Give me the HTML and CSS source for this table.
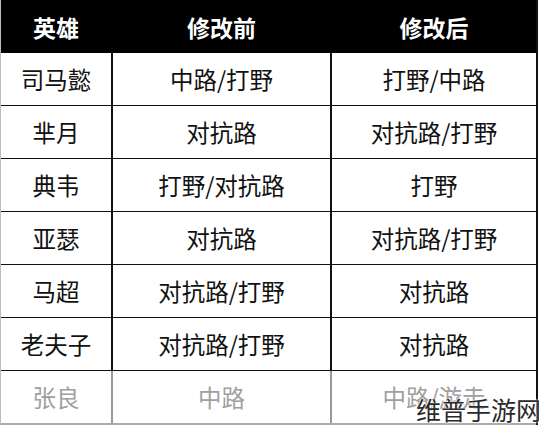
FILE: index.html
```html
<!DOCTYPE html>
<html lang="zh">
<head>
<meta charset="utf-8">
<link rel="stylesheet" href="styles.css">
</head>
<body>
<div class="table">
  <div class="row head">
    <div class="cell c1">英雄</div>
    <div class="cell c2">修改前</div>
    <div class="cell c3">修改后</div>
  </div>
  <div class="row">
    <div class="cell c1">司马懿</div>
    <div class="cell c2">中路/打野</div>
    <div class="cell c3">打野/中路</div>
  </div>
  <div class="row">
    <div class="cell c1">芈月</div>
    <div class="cell c2">对抗路</div>
    <div class="cell c3">对抗路/打野</div>
  </div>
  <div class="row">
    <div class="cell c1">典韦</div>
    <div class="cell c2">打野/对抗路</div>
    <div class="cell c3">打野</div>
  </div>
  <div class="row">
    <div class="cell c1">亚瑟</div>
    <div class="cell c2">对抗路</div>
    <div class="cell c3">对抗路/打野</div>
  </div>
  <div class="row">
    <div class="cell c1">马超</div>
    <div class="cell c2">对抗路/打野</div>
    <div class="cell c3">对抗路</div>
  </div>
  <div class="row">
    <div class="cell c1">老夫子</div>
    <div class="cell c2">对抗路/打野</div>
    <div class="cell c3">对抗路</div>
  </div>
  <div class="row faded">
    <div class="cell c1">张良</div>
    <div class="cell c2">中路</div>
    <div class="cell c3">中路/游走</div>
  </div>
</div>
<div class="watermark">维普手游网</div>
</body>
</html>
```
FILE: styles.css
```css
html, body {
  margin: 0;
  padding: 0;
  background: #ffffff;
}
body {
  width: 539px;
  height: 425px;
  overflow: hidden;
  position: relative;
  font-family: "Noto Sans CJK SC", "Noto Sans", sans-serif;
}
.table {
  width: 538px;
  display: flex;
  flex-direction: column;
  border-left: 1px solid #bbbbbb;
  border-right: 2px solid #111111;
  box-sizing: border-box;
}
.row {
  display: grid;
  grid-template-columns: 110px 219px 1fr;
  height: 53px;
  border-bottom: 1.5px solid #111111;
  box-sizing: border-box;
}
.row.head {
  background: #000000;
  color: #ffffff;
  font-weight: bold;
  height: 53px;
  border-bottom: none;
}
.cell {
  display: flex;
  align-items: center;
  justify-content: center;
  font-size: 23.5px;
  color: #111111;
  line-height: 1;
  padding-top: 1px;
}
.row.head .cell {
  color: #ffffff;
  font-size: 23px;
}
.c2, .c3 {
  border-left: 2px solid #111111;
}
.row.head .c2, .row.head .c3 {
  border-left-color: #000000;
}
.row.faded {
  border-bottom: 2px solid #aaaaaa;
  height: 54px;
}
.row.faded .cell {
  color: #a0a0a0;
}
.row.faded .c2, .row.faded .c3 {
  border-left-color: #999999;
}
.watermark {
  position: absolute;
  right: -2px;
  bottom: 3px;
  font-size: 25px;
  line-height: 1;
  color: #2a2a2a;
  text-shadow: 0 0 2px #ffffff, 0 0 2px #ffffff;
}
```
